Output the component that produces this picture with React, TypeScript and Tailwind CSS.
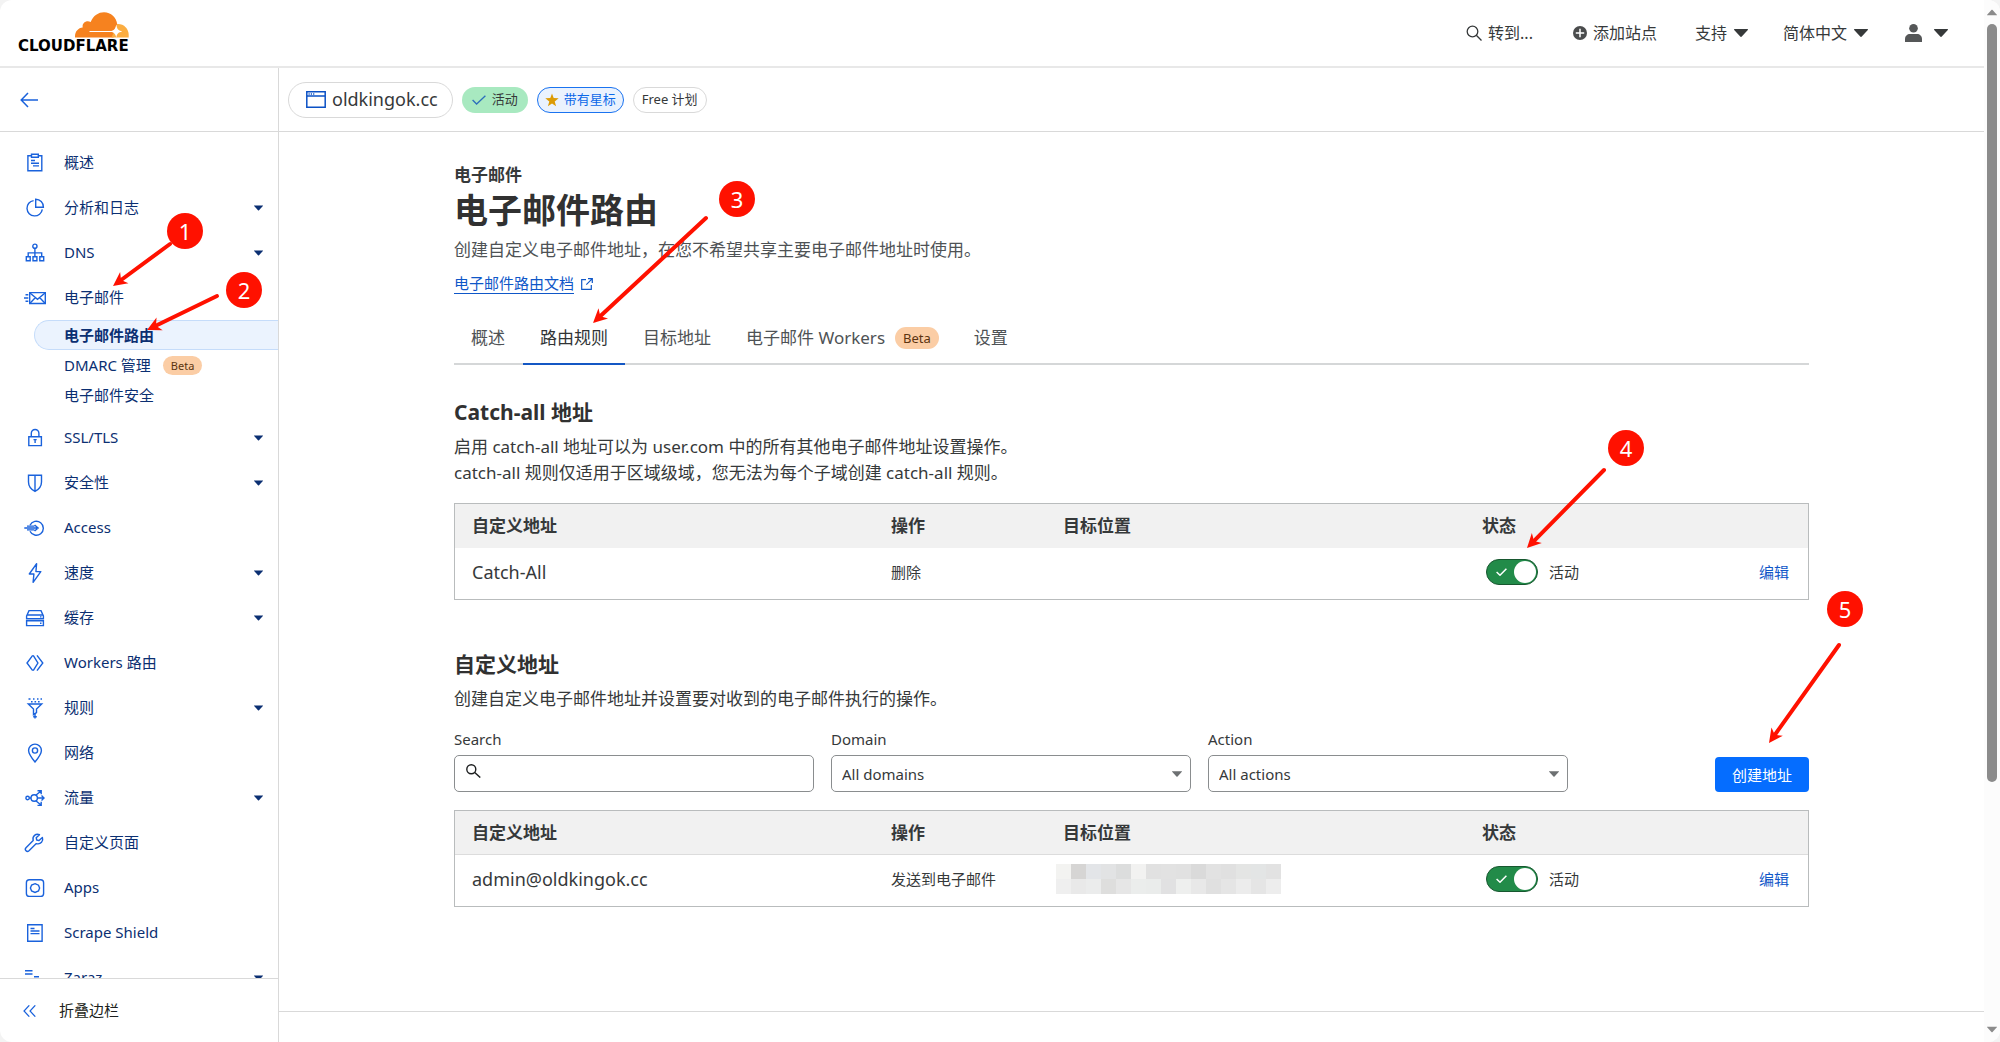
import type { ReactNode } from "react";
import { clsx } from "clsx";

function NavIcon({ children }: { children: ReactNode }) {
  return (
    <svg
      viewBox="0 0 20 20"
      className="h-5 w-5 shrink-0 overflow-visible text-[#1a62dc]"
      fill="none"
      stroke="currentColor"
      strokeWidth="1.4"
      aria-hidden="true"
    >
      {children}
    </svg>
  );
}

function Caret({ className }: { className: string }) {
  return (
    <svg viewBox="0 0 14 8" className={className} fill="currentColor" aria-hidden="true">
      <path d="M0.5 0h13c.5 0 .6.5.3.9L7.8 7.5c-.5.5-1.1.5-1.6 0L.2.9C-.1.5 0 0 .5 0z" />
    </svg>
  );
}

const icons: Record<string, ReactNode> = {
  overview: (
    <>
      <path d="M6.5 2.8H2.9v14.9h13.9V2.8h-3.5" />
      <path d="M6.5 1.3h6.8v2.9H6.5zM6 7.5h4M6 10.2h8M8 12.9h6" />
    </>
  ),
  analytics: (
    <>
      <path d="M8.6 2.6a7.7 7.7 0 1 0 8.7 8.8" />
      <path d="M10.7 1.2v8h7.7a7.7 7.7 0 0 0-7.7-8z" />
    </>
  ),
  dns: (
    <>
      <circle cx="9.9" cy="3.2" r="2.1" />
      <path d="M9.9 5.3v8.4M3.2 13.7V9.9h13.5v3.8" />
      <path d="M1.3 13.8h3.9v4H1.3zM8 13.8h3.9v4H8zM14.8 13.8h3.9v4h-3.9z" />
    </>
  ),
  email: (
    <>
      <path d="M4.7 4.6h15.6v10.9H4.7z" />
      <path d="m5 5 7.5 6.4L20 5M5 15.2l5.2-5.4M20 15.2l-5.2-5.4M.5 6.7h2.8M-1 10h4.3M.5 13.2h2.8" />
    </>
  ),
  ssl: (
    <>
      <path d="M3.8 8.7h12.6v8.9H3.8zM6.3 8.7V5.3a3.8 3.8 0 0 1 7.6 0v3.4" />
      <path d="M8.5 11.6h3.2M10.1 11.6v3.4" />
    </>
  ),
  security: <path d="M3.5 2.3h13v6.6c0 4.5-3.7 8-6.5 9.5-2.8-1.5-6.5-5-6.5-9.5zM10 2.3v16" />,
  access: (
    <>
      <path d="M5 7.2a7 7 0 1 1 0 6" />
      <path d="M-.7 10H12M2 8.1h7.5M2 11.9h7.5M9.6 7l3.5 3-3.5 3" />
    </>
  ),
  speed: <path d="M11.6.7 4.3 11h4.6l-.8 8.4L15.8 8.6h-4.9z" strokeLinejoin="round" />,
  caching: (
    <>
      <path d="M1.6 8 4 2.6h12L18.4 8v2.7H1.6zM1.6 7h16.8M1.6 12.8h16.8v4.8H1.6z" />
      <path d="M15 15.2h1.5M15 8.9h1.5" />
    </>
  ),
  workers: <path d="M7.7 2.3 2 10l5.7 7.7M8.2 2.3l4.7 7.7-4.7 7.7M12 2.3 17.8 10 12 17.7" />,
  rules: (
    <>
      <path d="M3.3 6h13.4l-5.2 5v3.6l-3 2v-5.6z" />
      <path d="M3.5 1h2M8 1h1.5M12 1h1.5M15.5 1h1.5M6 3.7h1.6M9.5 3.7h1.6M13 3.7h1.6M10 15v5.5M8.2 18.8h3.6" />
    </>
  ),
  network: (
    <>
      <path d="M10 19c-2.8-3.4-6.4-7.7-6.4-11.5a6.4 6.4 0 0 1 12.8 0C16.4 11.3 12.8 15.6 10 19z" />
      <circle cx="10" cy="7.5" r="2.6" />
    </>
  ),
  traffic: (
    <>
      <circle cx="2.6" cy="10" r="1.7" />
      <circle cx="9.2" cy="10" r="3.2" />
      <path d="M4.3 10H6M12.4 10h6.5M16.5 7.6 19 10l-2.5 2.4M10.8 7.2 16 3M12.5 2.7h3.7v3.6M10.8 12.8 16 17M12.5 17.4h3.7v-3.6" />
    </>
  ),
  pages: (
    <path
      d="M17.4 4.4 14 7.6l-2.3-.6-.5-2.3 3.3-3c-3.6-1.3-7.5 1.2-6.3 5.8L1 14.7c-.9 1-.9 2.2 0 3.1s2.1.8 3 0l7.3-7.2c4.5 1.2 7.4-2.5 6.1-6.2z"
      strokeLinejoin="round"
    />
  ),
  apps: (
    <>
      <rect x="1.4" y="1.8" width="17.2" height="16.6" rx="3" />
      <path d="m10 5.7 3.5 1.5L14.6 10l-1.1 3-3.5 1.4L6.6 13 5.4 10l1.2-2.9z" />
    </>
  ),
  scrape: <path d="M2.7 1.8h14.4v16.5H2.7zM5.5 5.5h4M5.5 8h9M5.5 10.6h9" />,
  zaraz: <path d="M0 2.7h7.5M0 6h7.5M9 8.7h5" />,
};

type SubItem = { label: string; active?: boolean; beta?: boolean };
type NavItem = { icon: string; label: string; caret?: boolean; children?: SubItem[] };

const navItems: NavItem[] = [
  { icon: "overview", label: "概述" },
  { icon: "analytics", label: "分析和日志", caret: true },
  { icon: "dns", label: "DNS", caret: true },
  {
    icon: "email",
    label: "电子邮件",
    children: [
      { label: "电子邮件路由", active: true },
      { label: "DMARC 管理", beta: true },
      { label: "电子邮件安全" },
    ],
  },
  { icon: "ssl", label: "SSL/TLS", caret: true },
  { icon: "security", label: "安全性", caret: true },
  { icon: "access", label: "Access" },
  { icon: "speed", label: "速度", caret: true },
  { icon: "caching", label: "缓存", caret: true },
  { icon: "workers", label: "Workers 路由" },
  { icon: "rules", label: "规则", caret: true },
  { icon: "network", label: "网络" },
  { icon: "traffic", label: "流量", caret: true },
  { icon: "pages", label: "自定义页面" },
  { icon: "apps", label: "Apps" },
  { icon: "scrape", label: "Scrape Shield" },
  { icon: "zaraz", label: "Zaraz", caret: true },
];

function Beta({ className }: { className?: string }) {
  return (
    <span className={clsx("rounded-full bg-[#fbcda5] text-[#5c3410]", className)}>Beta</span>
  );
}

function Logo() {
  return (
    <a href="#" className="flex flex-col items-end" aria-label="Cloudflare">
      <svg viewBox="0 0 54 26" className="h-[26px] w-[54px]" aria-hidden="true">
        <path
          fill="#f6821f"
          d="M0 25.5c-.3-5.5 2.7-9.5 7.7-10-.8-4.5 3.5-7.7 8-5.5C18.2 3.5 23.5.2 29 .2c7 0 12.5 5.3 13.2 11.8l-3.7 13.5z"
        />
        <path fill="#fbad41" d="M42.2 12c6.3-.5 11.5 4.5 11.5 11v2.5H36.5z" />
        <path stroke="#fff" strokeWidth="1.2" d="M14.5 19.5H42" />
        <path
          fill="#fff"
          d="M41.3 12.5c.7 4.5 1.7 6 6 7-4.3 1-5.3 2.2-6 6-1-3.8-2-5-6.3-6 4.3-1 5.3-2.5 6.3-7z"
        />
      </svg>
      <span className="font-['DejaVu_Sans',sans-serif] text-[15px] leading-4 font-bold text-black">
        CLOUDFLARE
      </span>
    </a>
  );
}

function Header() {
  return (
    <header className="flex h-[68px] shrink-0 items-center justify-between border-b-2 border-[#e8e8e8] pr-9 pl-[18px] text-[16px] text-[#36393a]">
      <Logo />
      <nav className="flex items-center">
        <button className="mr-[40px] flex items-center gap-[6px]">
          <svg viewBox="0 0 16 16" className="h-4 w-4" fill="none" stroke="currentColor" strokeWidth="1.3">
            <circle cx="6.5" cy="6.5" r="5.3" />
            <path d="m10.3 10.3 5.2 5.2" />
          </svg>
          转到...
        </button>
        <button className="mr-[38px] flex items-center gap-[6px]">
          <svg viewBox="0 0 14 14" className="h-[14px] w-[14px]">
            <circle cx="7" cy="7" r="7" fill="#4a4c4d" />
            <path d="M7 2.8v8.4M2.8 7h8.4" stroke="#fff" strokeWidth="1.5" />
          </svg>
          添加站点
        </button>
        <button className="mr-[35px] flex items-center gap-[7px]">
          支持
          <Caret className="h-2 w-[14px]" />
        </button>
        <button className="mr-[37px] flex items-center gap-[7px]">
          简体中文
          <Caret className="h-2 w-[14px]" />
        </button>
        <button className="flex items-center gap-3" aria-label="帐户">
          <svg viewBox="0 0 17 18" className="h-[18px] w-[17px]" fill="#555758">
            <circle cx="8.5" cy="4.3" r="4.3" />
            <path d="M0 18v-3c0-3 2.3-5 5-5h7c2.7 0 5 2 5 5v3z" />
          </svg>
          <Caret className="h-2 w-[14px]" />
        </button>
      </nav>
    </header>
  );
}

function Sidebar() {
  return (
    <aside className="flex w-[279px] shrink-0 flex-col border-r border-[#d9d9d9]">
      <div className="flex h-[64px] shrink-0 items-center border-b border-[#d9d9d9] pl-[20px]">
        <button aria-label="返回">
          <svg viewBox="0 0 18 16" className="h-4 w-[18px] text-[#1a62dc]" fill="none" stroke="currentColor" strokeWidth="1.5">
            <path d="M18 8H1.5M8 .9 1.2 8 8 15.1" />
          </svg>
        </button>
      </div>
      <ul className="min-h-0 flex-1 overflow-hidden pt-2 text-[15px] text-[#0b2f72]">
        {navItems.map((item) => (
          <li key={item.label}>
            <a href="#" className="flex h-[45px] items-center pr-[15px] pl-[25px]">
              <NavIcon>{icons[item.icon]}</NavIcon>
              <span className="ml-[19px]">{item.label}</span>
              {item.caret && <Caret className="ml-auto h-[6px] w-[9px]" />}
            </a>
            {item.children && (
              <ul className="pb-[5px]">
                {item.children.map((sub) => (
                  <li key={sub.label}>
                    <a
                      href="#"
                      className={clsx(
                        "ml-[34px] flex h-[30px] items-center rounded-l-full border border-r-0 pl-[29px]",
                        sub.active ? "border-[#c5dcfa] bg-[#ebf3fe] font-bold" : "border-transparent"
                      )}
                    >
                      {sub.label}
                      {sub.beta && <Beta className="ml-3 px-2 text-[11px] leading-[19px]" />}
                    </a>
                  </li>
                ))}
              </ul>
            )}
          </li>
        ))}
      </ul>
      <button className="flex h-16 shrink-0 items-center gap-[23px] border-t border-[#d9d9d9] pl-[23px] text-[15px] text-[#1d1f20]">
        <svg viewBox="0 0 13 12" className="h-3 w-[13px] text-[#1a62dc]" fill="none" stroke="currentColor" strokeWidth="1.2">
          <path d="M6.3.3 1 6l5.3 5.7M12.3.3 7 6l5.3 5.7" />
        </svg>
        折叠边栏
      </button>
    </aside>
  );
}

function ZoneBar() {
  return (
    <div className="flex h-[64px] shrink-0 items-center gap-[9px] border-b border-[#d9d9d9] pl-[9px] text-[13px] text-[#36393a]">
      <button className="flex h-9 items-center gap-[6px] rounded-full border border-[#d9d9d9] pr-[14px] pl-[17px] text-[18px]">
        <svg viewBox="0 0 20 17" className="h-[17px] w-5 text-[#0b51c5]" fill="none" stroke="currentColor" strokeWidth="1.5">
          <path d="M.8.8h18.4v15.4H.8zM.8 5h18.4" />
          <path d="M2.5 2.9h1.2M4.8 2.9H6M7.1 2.9h1.2" />
        </svg>
        oldkingok.cc
      </button>
      <span className="flex h-[26px] items-center gap-[6px] rounded-full bg-[#a8e9c0] px-[10px]">
        <svg viewBox="0 0 14 10" className="h-[10px] w-[14px]" fill="none" stroke="#2c6fbb" strokeWidth="1.3">
          <path d="m.6 5 4 4L13.4.8" />
        </svg>
        活动
      </span>
      <span className="flex h-[26px] items-center gap-[5px] rounded-full border border-[#1a73f0] bg-[#eaf2fe] px-[7px] text-[#0b68e8]">
        <svg viewBox="0 0 14 14" className="h-[14px] w-[14px]" fill="#dc9b06">
          <path d="m7 .4 1.7 4.7 5 .2-4 3.1 1.4 4.8L7 10.4l-4.1 2.8 1.4-4.8-4-3.1 5-.2z" />
        </svg>
        带有星标
      </span>
      <span className="flex h-[26px] items-center rounded-full border border-[#d9d9d9] px-2">Free 计划</span>
    </div>
  );
}

const tabs = [
  { label: "概述" },
  { label: "路由规则", active: true },
  { label: "目标地址" },
  { label: "电子邮件 Workers", beta: true },
  { label: "设置" },
];

function Tabs() {
  return (
    <div role="tablist" className="mt-[25px] flex gap-px border-b-2 border-[#d5d7d8] text-[17px] leading-[26px]">
      {tabs.map((tab) => (
        <button
          key={tab.label}
          role="tab"
          aria-selected={!!tab.active}
          className={clsx(
            "-mb-[2px] flex items-center border-b-2 px-[17px] pt-[6px] pb-3",
            tab.active ? "border-[#1457c4] text-[#313435]" : "border-transparent text-[#4e5255]"
          )}
        >
          {tab.label}
          {tab.beta && <Beta className="ml-[10px] px-2 text-[13px] leading-[22px]" />}
        </button>
      ))}
    </div>
  );
}

function Toggle({ label }: { label: string }) {
  return (
    <label className="flex items-center gap-[11px] text-[15px]">
      <span className="relative ml-[4px] h-[26px] w-[52px]">
        <input
          type="checkbox"
          defaultChecked
          className="block h-full w-full appearance-none rounded-full border border-[#17572f] bg-[#228b49]"
        />
        <span className="absolute top-[2px] right-[2px] h-[22px] w-[22px] rounded-full bg-white" />
        <svg viewBox="0 0 11 8" className="absolute top-[9px] left-[10px] h-2 w-[11px]" fill="none" stroke="#fff" strokeWidth="1.5">
          <path d="M.6 4 4 7.2 10.4.7" />
        </svg>
      </span>
      {label}
    </label>
  );
}

// Pixelated shades hiding the forwarding address
const mosaic = [
  ["#f3f3f1", "#d6d5d4", "#e3e5e8", "#e2e3e4", "#dcdddd", "#f2f2f1", "#e1e1e1", "#e2e2e2", "#e1e1e1", "#dadada", "#e2e2e2", "#e0e0e0", "#e4e5e4", "#e3e5e5", "#e2e2e2"],
  ["#efefef", "#e9e9e9", "#ebecec", "#dededd", "#e6e6e6", "#ebedec", "#eaeceb", "#e1e1e2", "#eeefee", "#e8e8e8", "#e0e0e0", "#e5e5e5", "#ececec", "#e5e5e5", "#ededed"],
];

function Mosaic() {
  return (
    <div className="-ml-[7px] grid w-[225px] grid-cols-15" aria-hidden="true">
      {mosaic.flat().map((color, i) => (
        <span key={i} className="h-[15px]" style={{ backgroundColor: color }} />
      ))}
    </div>
  );
}

type AddressRow = { address: string; action: string; target?: ReactNode };

function AddressTable({ rows, divided }: { rows: AddressRow[]; divided?: boolean }) {
  return (
    <table className="w-full table-fixed border-separate border-spacing-0 border border-[#b9bcbd] text-left">
      <colgroup>
        <col className="w-[419px]" />
        <col className="w-[172px]" />
        <col className="w-[419px]" />
        <col />
        <col />
      </colgroup>
      <thead className="bg-[#f1f1f1] text-[17px]">
        <tr className="h-11">
          {["自定义地址", "操作", "目标位置", "状态", ""].map((head) => (
            <th key={head} className={clsx("px-[17px] py-0 font-bold", divided && "border-b border-[#dcdcdc]")}>
              {head}
            </th>
          ))}
        </tr>
      </thead>
      <tbody className="text-[15px]">
        {rows.map((row) => (
          <tr key={row.address} className="h-[51px]">
            <td className="px-[17px] pt-0 pb-[3px] text-[18px]">{row.address}</td>
            <td className="px-[17px] pt-0 pb-[3px] whitespace-nowrap">{row.action}</td>
            <td className="px-[17px] pt-0 pb-[3px]">{row.target}</td>
            <td className="px-[17px] pt-0 pb-[3px]">
              <Toggle label="活动" />
            </td>
            <td className="px-[19px] pt-0 pb-[3px] text-right">
              <a href="#" className="text-[#0f57c8]">
                编辑
              </a>
            </td>
          </tr>
        ))}
      </tbody>
    </table>
  );
}

function FilterSelect({ id, label, value }: { id: string; label: string; value: string }) {
  return (
    <div className="max-w-[360px] flex-1">
      <label htmlFor={id} className="block leading-5">
        {label}
      </label>
      <div className="relative mt-[6px]">
        <select
          id={id}
          className="block h-[37px] w-full appearance-none rounded-[5px] border border-[#8a8d8f] bg-white pl-[10px] text-[15px]"
        >
          <option>{value}</option>
        </select>
        <Caret className="pointer-events-none absolute top-4 right-[9px] h-[6px] w-[10px] text-[#6d7072]" />
      </div>
    </div>
  );
}

function Filters() {
  return (
    <div className="mt-[17px] mb-[18px] flex items-end gap-[17px] text-[15px]">
      <div className="max-w-[360px] flex-1">
        <label htmlFor="search" className="block leading-5">
          Search
        </label>
        <div className="relative mt-[6px]">
          <input
            id="search"
            type="text"
            className="block h-[37px] w-full rounded-[5px] border border-[#8a8d8f] pr-3 pl-9"
          />
          <svg
            viewBox="0 0 15 14"
            className="pointer-events-none absolute top-[9px] left-3 h-[14px] w-[15px]"
            fill="none"
            stroke="#1d1f20"
            strokeWidth="1.4"
          >
            <circle cx="5.3" cy="5.3" r="4.5" />
            <path d="m8.7 8.4 5.6 5.2" />
          </svg>
        </div>
      </div>
      <FilterSelect id="domain" label="Domain" value="All domains" />
      <FilterSelect id="action" label="Action" value="All actions" />
      <button className="ml-auto h-[35px] rounded-[4px] bg-[#056dff] px-[17px] text-white">创建地址</button>
    </div>
  );
}

function Content() {
  return (
    <main className="flex-1 overflow-hidden px-6 pt-[30px] text-[17px] leading-[26px] text-[#36393a]">
      <div className="mx-auto max-w-[1355px]">
        <p className="font-bold">电子邮件</p>
        <h1 className="text-[34px] leading-[44px] font-bold text-[#313131]">电子邮件路由</h1>
        <p className="mt-[5px] text-[#4e5255]">
          创建自定义电子邮件地址，在您不希望共享主要电子邮件地址时使用。
        </p>
        <a href="#" className="mt-[10px] flex items-center gap-[7px] text-[15px] leading-5 text-[#0f57c8]">
          <span className="border-b border-[#0f57c8]">电子邮件路由文档</span>
          <svg viewBox="0 0 12 12" className="h-3 w-3" fill="none" stroke="currentColor" strokeWidth="1.2">
            <path d="M5 1.6H.7v9.7h9.6V7M7 .7h4.3V5M11.3.7 5.3 6.7" />
          </svg>
        </a>
        <Tabs />

        <h2 className="mt-[33px] text-[21px] leading-7 font-bold text-[#313131]">Catch-all 地址</h2>
        <p className="mt-2 mb-[17px]">
          启用 catch-all 地址可以为 user.com 中的所有其他电子邮件地址设置操作。
          <br />
          catch-all 规则仅适用于区域级域，您无法为每个子域创建 catch-all 规则。
        </p>
        <AddressTable rows={[{ address: "Catch-All", action: "删除" }]} />

        <h2 className="mt-[50px] text-[21px] leading-7 font-bold text-[#313131]">自定义地址</h2>
        <p className="mt-2">创建自定义电子邮件地址并设置要对收到的电子邮件执行的操作。</p>
        <Filters />
        <AddressTable
          divided
          rows={[{ address: "admin@oldkingok.cc", action: "发送到电子邮件", target: <Mosaic /> }]}
        />
      </div>
    </main>
  );
}

function Scrollbar() {
  return (
    <div className="flex w-4 shrink-0 flex-col items-center bg-[#fcfcfc] py-[9px] text-[#8b8b8b]" aria-hidden="true">
      <Caret className="h-[7px] w-[10px] rotate-180" />
      <div className="mt-2 mb-auto h-[74%] w-[10px] rounded-full bg-[#8b8b8b]" />
      <Caret className="h-[7px] w-[10px]" />
    </div>
  );
}

const steps = [
  { n: 1, at: "top-[213px] left-[167px]", from: [170, 244], to: [113, 286] },
  { n: 2, at: "top-[272px] left-[226px]", from: [217, 296], to: [147, 330] },
  { n: 3, at: "top-[181px] left-[719px]", from: [706, 218], to: [593, 323] },
  { n: 4, at: "top-[430px] left-[1608px]", from: [1604, 470], to: [1527, 548] },
  { n: 5, at: "top-[591px] left-[1827px]", from: [1839, 645], to: [1769, 743] },
];

function Annotations() {
  return (
    <div className="pointer-events-none absolute inset-0">
      <svg className="h-full w-full" fill="#ff1100" aria-hidden="true">
        {steps.map(({ n, from, to }) => {
          const dx = to[0] - from[0];
          const dy = to[1] - from[1];
          const length = Math.hypot(dx, dy);
          const angle = (Math.atan2(dy, dx) * 180) / Math.PI;
          return (
            <g key={n} transform={`translate(${to[0]} ${to[1]}) rotate(${angle})`}>
              <path d={`M${-length} 0H-8`} stroke="#ff1100" strokeWidth="4" strokeLinecap="round" />
              <path d="M0 0-14-7-10 0-14 7z" />
            </g>
          );
        })}
      </svg>
      {steps.map(({ n, at }) => (
        <span
          key={n}
          className={clsx(
            "absolute flex h-9 w-9 items-center justify-center rounded-full bg-[#ff1100] text-[22px] leading-9 text-white",
            at
          )}
        >
          {n}
        </span>
      ))}
    </div>
  );
}

export default function App() {
  return (
    <div className="relative h-screen bg-[#f3f3f3] font-['Noto_Sans','Noto_Sans_CJK_SC',sans-serif]">
      <div className="flex h-full overflow-hidden rounded-xl bg-white">
        <div className="flex min-w-0 flex-1 flex-col">
          <Header />
          <div className="flex min-h-0 flex-1">
            <Sidebar />
            <div className="flex min-w-0 flex-1 flex-col">
              <ZoneBar />
              <Content />
              <footer className="h-[31px] shrink-0 border-t border-[#d9d9d9]" />
            </div>
          </div>
        </div>
        <Scrollbar />
      </div>
      <Annotations />
    </div>
  );
}
